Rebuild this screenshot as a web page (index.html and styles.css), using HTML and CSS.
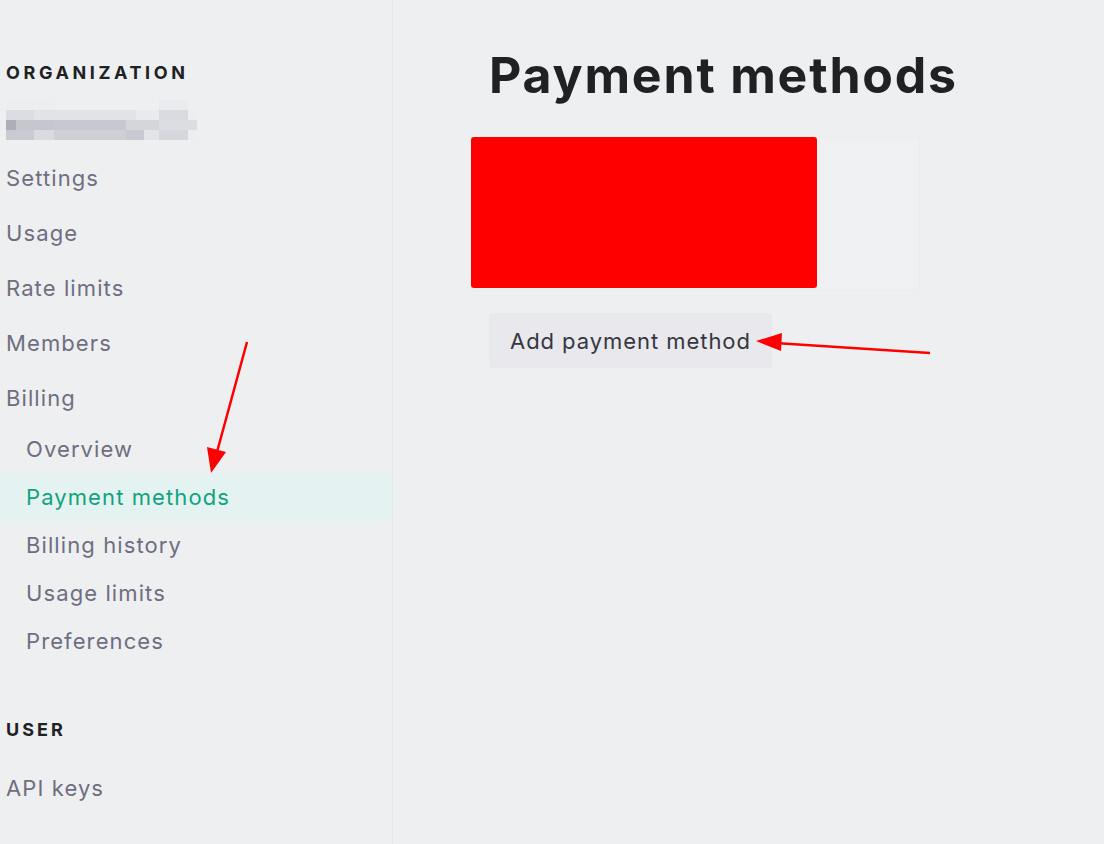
FILE: index.html
```html
<!DOCTYPE html>
<html>
<head>
<meta charset="utf-8">
<link rel="stylesheet" href="styles.css">
</head>
<body>
<div class="page">
  <aside class="sidebar">
    <div class="section-title org">ORGANIZATION</div>
    <div class="blur">
      <div class="b r1"></div>
      <div class="b r2"></div>
      <div class="b r3"></div>
      <div class="b r4"></div>
    </div>
    <nav class="nav">
      <div class="item">Settings</div>
      <div class="item">Usage</div>
      <div class="item">Rate limits</div>
      <div class="item">Members</div>
      <div class="item">Billing</div>
      <div class="sub">Overview</div>
      <div class="sub active">Payment methods</div>
      <div class="sub">Billing history</div>
      <div class="sub">Usage limits</div>
      <div class="sub">Preferences</div>
    </nav>
    <div class="section-title user">USER</div>
    <nav class="nav">
      <div class="item api">API keys</div>
    </nav>
  </aside>
  <main class="main">
    <h1 class="title">Payment methods</h1>
    <div class="card">
      <div class="redact"></div>
    </div>
    <button class="add-btn">Add payment method</button>
  </main>
</div>
<svg class="arrows" width="1104" height="844" viewBox="0 0 1104 844">
  <line x1="247" y1="342" x2="217" y2="452" stroke="#ff0000" stroke-width="2.5"/>
  <polygon points="211,473 207,447 226,452" fill="#ff0000"/>
  <line x1="930" y1="353" x2="775" y2="343" stroke="#ff0000" stroke-width="2.5"/>
  <polygon points="756,341 782,333 781,351" fill="#ff0000"/>
</svg>
</body>
</html>
```
FILE: styles.css
```css
html, body {
  margin: 0;
  padding: 0;
  background: #eeeff1;
  font-family: Inter, "Noto Sans", sans-serif;
}
.page {
  display: flex;
  min-height: 844px;
}
.sidebar {
  width: 392px;
  border-right: 1px solid #e6e7ea;
}
.section-title {
  font-size: 18px;
  font-weight: 700;
  letter-spacing: 3.6px;
  color: #202123;
  line-height: 24px;
  padding-left: 6px;
}
.section-title.user { letter-spacing: 3px; }
.org { margin-top: 61px; }
.blur {
  margin: 15px 0 10px 6px;
  width: 191px;
  height: 40px;
}
.b { height: 10px; }
.r1 { background: linear-gradient(90deg, #eceef0 0 48px, #eeeff1 48px 153px, #eaebee 153px 182px, #eeeff1 182px); }
.r2 { background: linear-gradient(90deg, #dcdde2 0 28px, #e2e3e7 28px 130px, #e9eaed 130px 153px, #dadbe0 153px 182px, #eceef0 182px); }
.r3 { background: linear-gradient(90deg, #aeaeb8 0 10px, #c6c6ce 10px 48px, #c8c8d0 48px 120px, #d5d6db 120px 153px, #dcdde2 153px 191px); }
.r4 { background: linear-gradient(90deg, #cacad2 0 28px, #dadbe0 28px 48px, #cfd0d6 48px 120px, #c9c9d1 120px 138px, #e3e4e8 138px 153px, #d6d7dc 153px 182px, #eceef0 182px); }
.nav { display: flex; flex-direction: column; }
.item {
  height: 55px;
  display: flex;
  align-items: center;
  padding-left: 6px;
  font-size: 22px;
  letter-spacing: 1.1px;
  color: #6e6e80;
}
.sub {
  height: 48px;
  display: flex;
  align-items: center;
  padding-left: 26px;
  font-size: 22px;
  letter-spacing: 1.1px;
  color: #6e6e80;
}
.sub.active {
  background: #e4f3f1;
  color: #10a37f;
}
.user { margin-top: 53px; }
.api { margin-top: 18px; }
.main {
  flex: 1;
  padding-left: 78px;
}
.title {
  margin: 45px 0 0 18px;
  font-size: 50px;
  line-height: 60px;
  font-weight: 700;
  color: #202123;
  letter-spacing: 1.8px;
}
.card {
  margin-top: 32px;
  width: 449px;
  height: 154px;
  background: #eff0f2;
  border: 1px solid #ececef;
  border-radius: 4px;
  box-sizing: border-box;
  display: flex;
}
.redact {
  width: 346px;
  height: 151px;
  background: #ff0000;
  border-radius: 3px;
  margin: -1px 0 0 -1px;
}
.add-btn {
  margin: 22px 0 0 18px;
  height: 55px;
  padding: 0 21px;
  border: none;
  border-radius: 4px;
  background: #e8e8ed;
  color: #353740;
  font-family: Inter, "Noto Sans", sans-serif;
  font-size: 22px;
  letter-spacing: 0.95px;
}
.arrows {
  position: absolute;
  left: 0;
  top: 0;
  pointer-events: none;
}
```
